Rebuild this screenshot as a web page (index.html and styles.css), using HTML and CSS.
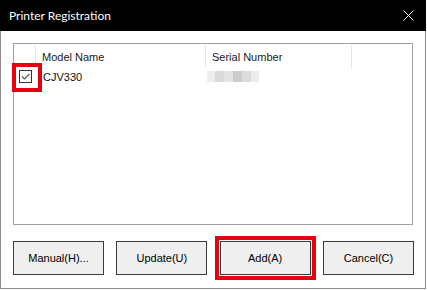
FILE: index.html
```html
<!DOCTYPE html>
<html>
<head>
<meta charset="utf-8">
<link rel="stylesheet" href="styles.css">
</head>
<body>
<div class="window">
  <div class="titlebar">
    <span class="title">Printer Registration</span>
    <svg class="close" width="11" height="11" viewBox="0 0 11 11"><path d="M0.5 0.5L10.5 10.5M10.5 0.5L0.5 10.5" stroke="#fff" stroke-width="1" fill="none"/></svg>
  </div>
  <div class="content">
    <div class="listview">
      <div class="header">
        <div class="hcell hcheck"></div>
        <div class="hcell hmodel">Model Name</div>
        <div class="hcell hserial">Serial Number</div>
        <div class="hcell hrest"></div>
      </div>
      <div class="row">
        <div class="cell ccheck">
          <span class="checkbox">
            <svg width="11" height="11" viewBox="0 0 11 11"><path d="M2 5.5L4.5 8L9.5 3" stroke="#555" stroke-width="1.1" fill="none"/></svg>
          </span>
          <span class="mark"></span>
        </div>
        <div class="cell cmodel">CJV330</div>
        <div class="cell cserial">
          <span class="blur b1"></span><span class="blur b2"></span><span class="blur b3"></span><span class="blur b4"></span><span class="blur b5"></span><span class="blur b6"></span>
        </div>
      </div>
    </div>
    <div class="buttons">
      <button class="btn">Manual(H)...</button>
      <button class="btn">Update(U)</button>
      <button class="btn btn-marked">Add(A)</button>
      <button class="btn">Cancel(C)</button>
    </div>
  </div>
</div>
</body>
</html>
```
FILE: styles.css
```css
* { box-sizing: border-box; }
body {
  margin: 0;
  background: #ffffff;
  font-family: "Liberation Sans", Arial, sans-serif;
}
.window {
  width: 426px;
  height: 289px;
  border: 1px solid #8c8c8c;
  border-top: none;
  background: #ffffff;
  display: flex;
  flex-direction: column;
}
.titlebar {
  height: 31px;
  margin: 0 -1px;
  background: #000000;
  display: flex;
  align-items: center;
  justify-content: space-between;
  padding: 0 12px 0 9px;
  flex: none;
}
.title {
  color: #ffffff;
  font-family: "Lato", "Liberation Sans", sans-serif;
  font-size: 12px;
  padding-bottom: 1px;
}
.close { display: block; margin-top: -1px; }
.content {
  flex: 1;
  padding: 12px 12px 0 12px;
  display: flex;
  flex-direction: column;
}
.listview {
  width: 400px;
  height: 182px;
  border: 1px solid #a0a0a0;
  background: #ffffff;
  font-size: 11px;
  color: #000;
}
.header {
  display: flex;
  height: 24px;
  padding-top: 1px;
}
.hcell {
  display: flex;
  align-items: center;
  padding-left: 6px;
  padding-top: 1px;
  border-right: 1px solid #e5e5e5;
  color: #1a1a1a;
}
.hcheck { width: 22px; }
.hmodel { width: 170px; }
.hserial { width: 146px; }
.hrest { flex: 1; border-right: none; }
.row {
  display: flex;
  height: 17px;
  align-items: center;
}
.cell { display: flex; align-items: center; }
.ccheck {
  width: 22px;
  padding-left: 5px;
  position: relative;
  height: 100%;
}
.checkbox {
  width: 13px;
  height: 13px;
  border: 1px solid #333333;
  background: #fff;
  display: flex;
  align-items: center;
  justify-content: center;
}
.checkbox svg { display: block; }
.mark {
  position: absolute;
  left: -2px;
  top: -5px;
  width: 30px;
  height: 29px;
  border: 4px solid #e60012;
}
.cmodel {
  width: 170px;
  padding-left: 7px;
  color: #111;
}
.cserial {
  padding-left: 1px;
  height: 11px;
}
.blur { display: block; height: 11px; }
.b1 { width: 8px; background: #eeeeee; }
.b2 { width: 9px; background: #dadada; }
.b3 { width: 9px; background: #e4e4e4; }
.b4 { width: 9px; background: #cccccc; }
.b5 { width: 9px; background: #dcdcdc; }
.b6 { width: 8px; background: #ececec; }
.buttons {
  display: flex;
  justify-content: space-between;
  width: 401px;
  margin-top: 16px;
}
.btn {
  width: 91px;
  height: 34px;
  border: 1px solid #3c3c3c;
  background: #efefef;
  font-family: "Liberation Sans", Arial, sans-serif;
  font-size: 11px;
  color: #000;
  padding: 0;
  border-radius: 0;
}
.btn-marked {
  outline: 4px solid #e60012;
  outline-offset: 1px;
}
```
